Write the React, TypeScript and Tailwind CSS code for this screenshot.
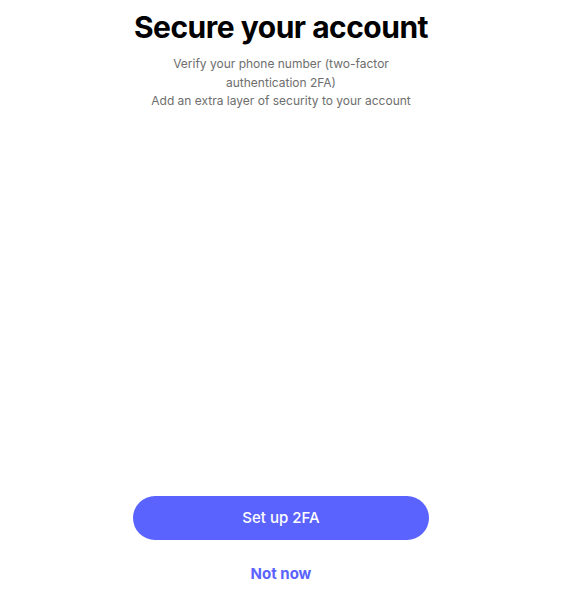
export default function App() {
  return (
    <div className="w-[562px] h-[591px] bg-white flex flex-col items-center font-['Inter',sans-serif]">
      <h1 className="mt-[9px] text-[30px] leading-[36px] font-bold text-black tracking-[-0.5px]">Secure your account</h1>
      <p className="mt-[10px] w-[232px] text-center text-[12px] leading-[18.5px] text-[#6e6e6e]">
        Verify your phone number (two-factor authentication 2FA)
      </p>
      <p className="w-[296px] text-center text-[12px] leading-[18.5px] text-[#6e6e6e]">
        Add an extra layer of security to your account
      </p>
      <div className="flex-1" />
      <button className="w-[296px] h-[44px] rounded-full bg-[#5b63fe] text-white text-[15px] font-medium">
        Set up 2FA
      </button>
      <button className="mt-[24px] mb-[7px] text-[15px] leading-[20px] font-bold text-[#5b63fe]">Not now</button>
    </div>
  )
}
